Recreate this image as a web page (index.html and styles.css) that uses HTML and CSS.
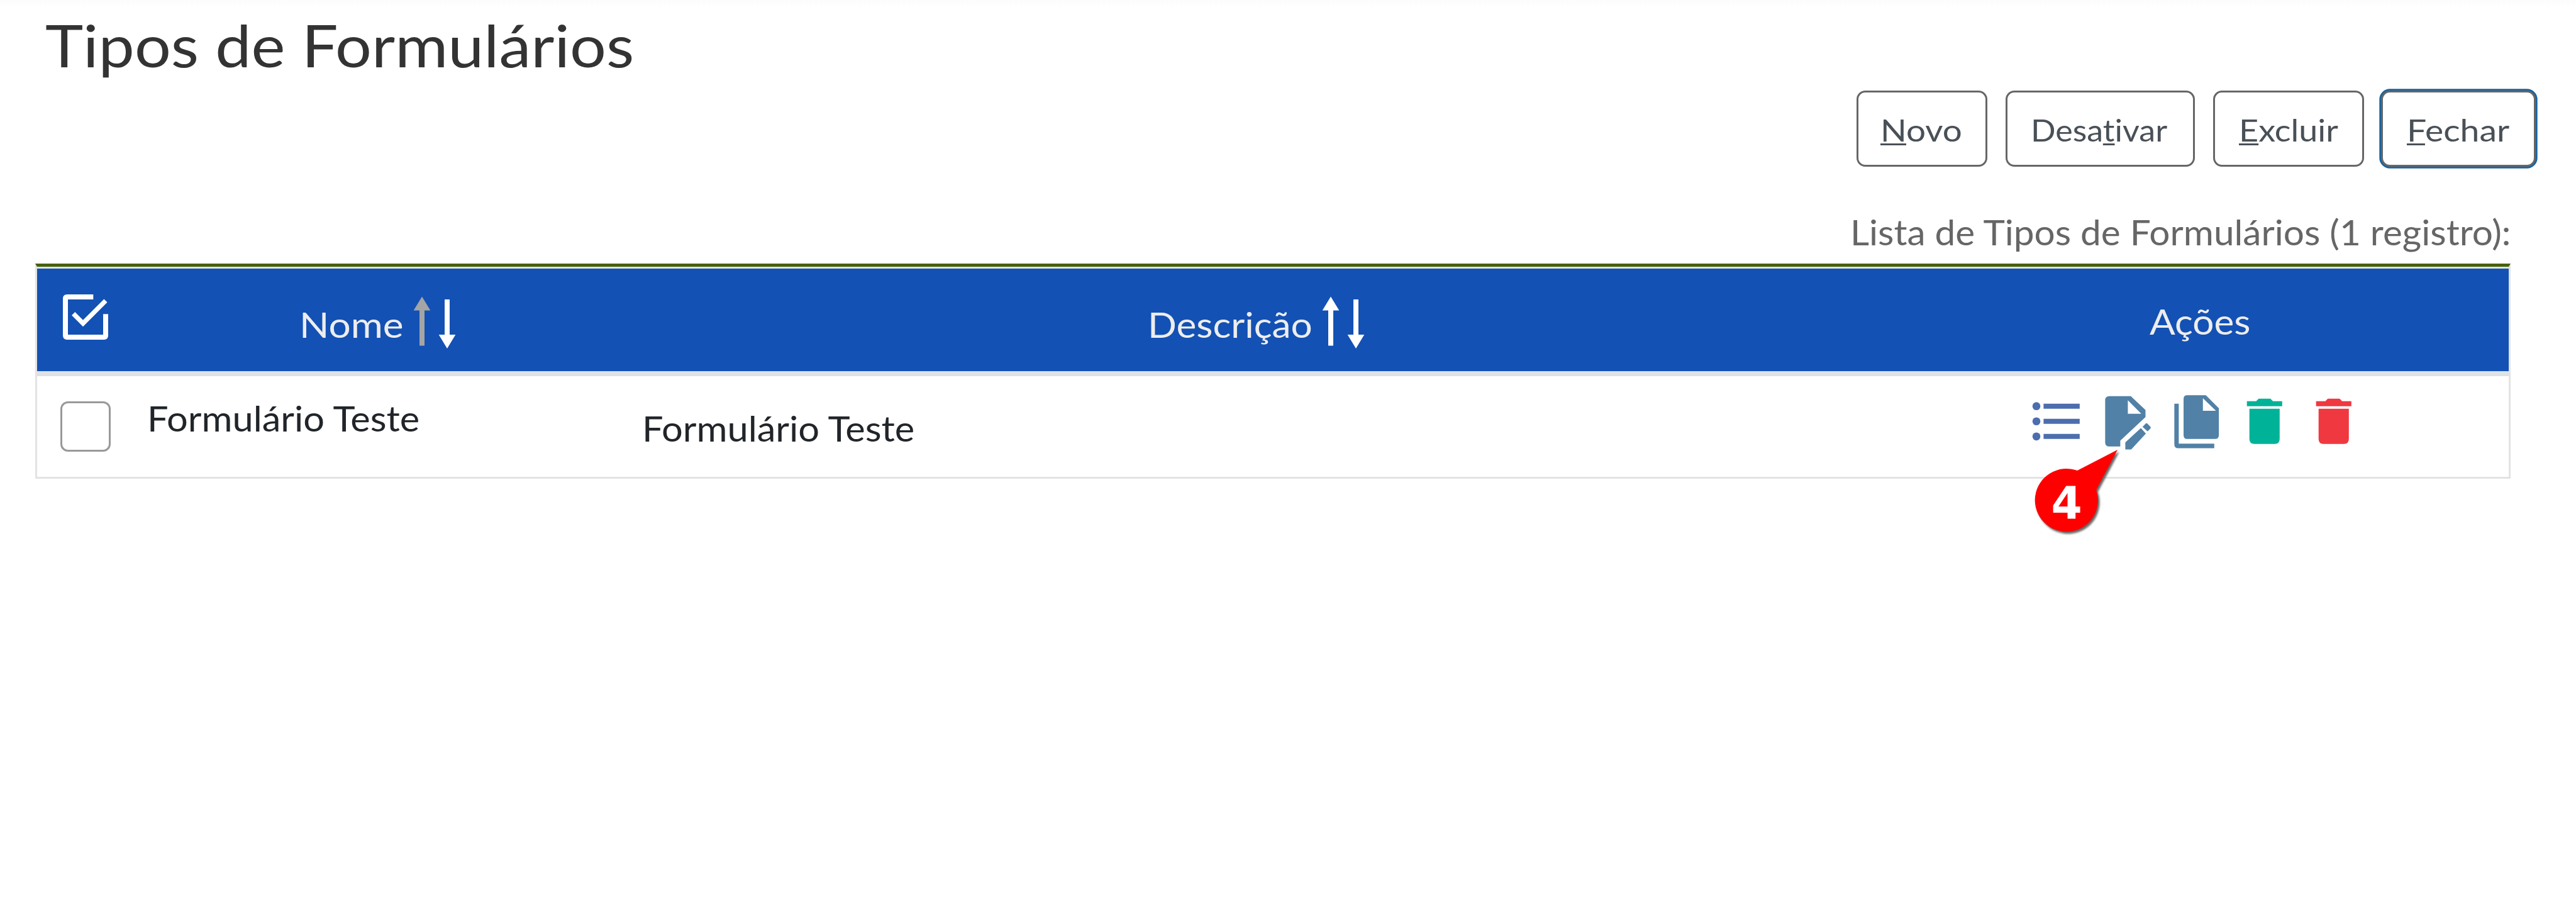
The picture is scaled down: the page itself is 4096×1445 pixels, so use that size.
FILE: index.html
```html
<!DOCTYPE html>
<html lang="pt-BR">
<head>
<meta charset="utf-8">
<title>Tipos de Formulários</title>
<link rel="stylesheet" href="styles.css">
</head>
<body>
<main class="page">
  <h1 class="title"><span class="wide">Tipos de Formulários</span></h1>
  <div class="toolbar">
    <button class="btn btn-new"><span class="wide"><u>N</u>ovo</span></button>
    <button class="btn btn-disable"><span class="wide">Desa<u>t</u>ivar</span></button>
    <button class="btn btn-delete"><span class="wide"><u>E</u>xcluir</span></button>
    <button class="btn btn-close"><span class="wide"><u>F</u>echar</span></button>
  </div>
  <p class="caption"><span class="wide">Lista de Tipos de Formulários (1 registro):</span></p>
  <section class="table">
    <div class="row head">
      <div class="cell head-check">
        <svg class="check-icon" viewBox="144 696 120 120" fill="none" stroke="#fff"><path d="M222.5 708H160q-4 0-4 4v88q0 4 4 4h88q4 0 4-4v-51" stroke-width="12"/><path d="M175 748l23 23 54-54" stroke-width="11"/></svg>
      </div>
      <div class="cell head-name">
        <span class="label"><span class="wide">Nome</span></span>
        <svg class="sort" viewBox="980 704 108 128" fill="#fff"><path fill="#a5a5a5" d="M1004 706l20 33h-14v84h-12v-84h-14z"/><path d="M1058 713h12v84h14l-20 33-20-33h14z"/></svg>
      </div>
      <div class="cell head-desc">
        <span class="label"><span class="wide">Descrição</span></span>
        <svg class="sort" viewBox="980 704 108 128" fill="#fff"><path d="M1004 706l20 33h-14v84h-12v-84h-14z"/><path d="M1058 713h12v84h14l-20 33-20-33h14z"/></svg>
      </div>
      <div class="cell head-actions"><span class="wide">Ações</span></div>
    </div>
    <div class="row body">
      <div class="cell body-check"><span class="checkbox"></span></div>
      <div class="cell body-name"><span class="wide">Formulário Teste</span></div>
      <div class="cell body-desc"><span class="wide">Formulário Teste</span></div>
      <div class="cell body-actions">
        <svg class="icon-list" viewBox="4836 940 120 132" fill="#4c6eaf"><circle cx="4848" cy="968" r="9.5"/><circle cx="4848" cy="1004" r="9.5"/><circle cx="4848" cy="1040" r="9.5"/><path d="M4865 962h86v12h-86zM4865 998h86v12h-86zM4865 1034h86v12h-86z"/></svg>
        <svg class="icon-edit" viewBox="5010 940 112 132" fill="#5181a6"><path fill-rule="evenodd" d="M5022 944h51l35 33v17l-60 56v14h-26q-10 0-10-10v-100q0-10 10-10zM5066 954v32h32z"/><path d="M5060 1054l37-34 12 13-35 38h-14zM5101 1017l8-8q2-1 4 1l7 7q1 2 0 4l-7 7z"/></svg>
        <svg class="icon-copy" viewBox="5174 940 112 132" fill="#5181a6"><path fill-rule="evenodd" d="M5206 942h45l31 31v64q0 9-9 9h-67q-8 0-8-9v-86q0-9 8-9zM5244 949v30h31z"/><path d="M5176 962h10.5v95h84.500v11h-86q-9 0-9-9z"/></svg>
        <svg class="icon-trash" viewBox="5346 940 92 132" fill="#00b398"><path d="M5350 956h22l6-6h28l6 6h22v12h-84zM5356 974h72v72q0 12-12 12h-48q-12 0-12-12z"/></svg>
        <svg class="icon-trash icon-remove" viewBox="5346 940 92 132" fill="#f03840"><path d="M5350 956h22l6-6h28l6 6h22v12h-84zM5356 974h72v72q0 12-12 12h-48q-12 0-12-12z"/></svg>
      </div>
    </div>
  </section>
  <svg class="callout" viewBox="4836 1060 220 220"><path d="M4945.300 1120L5041 1070.500 4990.300 1165.700A75 75 0 1 1 4945.300 1120z" fill="red"/><text x="4883" y="1233.300">4</text></svg>
</main>
</body>
</html>
```
FILE: styles.css
```css
* { box-sizing: border-box; }
body { margin: 0; background: #fff; font-family: "Lato", sans-serif; font-size: 56px; font-variant-ligatures: none; }
.page { position: relative; width: 4096px; height: 1445px; overflow: hidden; background: linear-gradient(#fcfcfc, #fff 12px); }
.wide { display: inline-block; white-space: nowrap; transform: scaleX(var(--stretch, 1.1)); transform-origin: left; }
.title { --stretch: 1.097; margin: 0; padding-left: 72px; font-size: 93.2px; line-height: 142px; font-weight: 400; color: #333; }
.toolbar { display: flex; height: 121px; margin-top: 2px; padding-left: 2952px; }
.btn { height: 121px; margin: 0; padding: 3px 0 0; border: 3px solid #666; border-radius: 14px; background: #fff; color: #495057; font: 48px "Lato", sans-serif; font-variant-ligatures: none; text-align: left; }
.btn u { text-decoration-thickness: 2.7px; text-underline-offset: 2.7px; text-decoration-skip-ink: none; }
.btn-new { --stretch: 1.141; width: 208px; margin-right: 29px; padding-left: 35px; }
.btn-disable { --stretch: 1.085; width: 301px; margin-right: 29px; padding-left: 37px; }
.btn-delete { --stretch: 1.123; width: 240px; margin-right: 27px; padding-left: 38px; }
.btn-close { --stretch: 1.154; width: 246px; padding-left: 38px; box-shadow: 0 0 0 2.7px #1864a0; }
.caption { --stretch: 1.045; margin: 55px 0 0; padding-left: 2942px; line-height: 97px; color: #666; }
.table { width: 3936px; margin: 2px 0 0 56px; border: 3px solid #e3e3e3; border-top: 5px solid #496004; }
.row { display: grid; grid-template-columns: 141px 804px 2139px 1fr; }
.cell { display: flex; align-items: flex-start; line-height: 80px; }
.head { height: 174px; border-top: 3px solid #dee2e6; border-bottom: 8px solid #dee2e6; background: #1351b4; color: #ededed; }
.head-check { padding: 37px 0 0 37px; }
.check-icon { width: 80px; height: 80px; }
.head-name { --stretch: 1.11; padding-left: 276px; }
.head-name .label { width: 179px; }
.head-desc { --stretch: 1.077; padding-left: 821px; }
.head-desc .label { width: 275px; }
.label { padding-top: 49px; }
.sort { width: 72px; height: 85.5px; margin-top: 43px; }
.head-actions { --stretch: 1.077; padding: 44px 0 0 275px; }
.body { height: 160px; color: #212529; }
.body-check { padding: 40px 0 0 37px; }
.checkbox { width: 80px; height: 80px; border: 3px solid #999; border-radius: 12px; }
.body-name { --stretch: 1.063; padding: 27px 0 0 34px; }
.body-desc { --stretch: 1.063; padding: 43px 0 0 17px; }
.body-actions { padding: 29px 0 0 87px; }
.body-actions svg { height: 88.2px; flex: none; }
.icon-list { width: 80.2px; }
.icon-edit { width: 74.8px; margin-left: 36px; }
.icon-copy { width: 74.8px; margin-left: 34.7px; }
.icon-trash { width: 61.5px; margin-left: 40px; }
.icon-remove { margin-left: 48px; }
.callout { position: absolute; left: 3230.3px; top: 708px; width: 147px; height: 147px; overflow: visible; }
.callout path { filter: drop-shadow(4px 5px 2px #666); }
.callout text { font: bold 106px "DejaVu Sans", sans-serif; fill: #fff; }
```
